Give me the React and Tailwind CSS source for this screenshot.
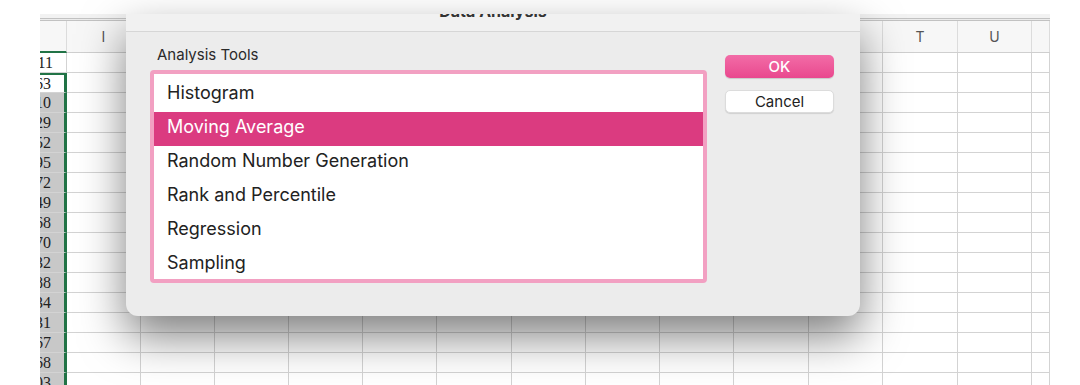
const colTemplate =
  "grid grid-cols-[27px_74px_74px_74px_74px_74px_75px_74px_74px_74px_75px_74px_75px_74px_18px]";

const letters = ["", "I", "J", "K", "L", "M", "N", "O", "P", "Q", "R", "S", "T", "U", ""];

const values = ["11", "63", "10", "29", "52", "95", "72", "49", "68", "70", "32", "88", "34", "31", "67", "68", "03"];

const tools = [
  "Histogram",
  "Moving Average",
  "Random Number Generation",
  "Rank and Percentile",
  "Regression",
  "Sampling",
];

function Sheet() {
  return (
    <div className="w-[1010px] ml-[40px] mt-[14px]">
      <div className="h-[4px] bg-[#f2f2f2]" />
      <div className="h-[3px] border-y border-[#c2c2c2] bg-[#ececec]" />
      <div className={`${colTemplate} h-[32px] bg-[#f7f7f7] border-b border-[#cfcfcf]`}>
        {letters.map((l, i) => (
          <div
            key={i}
            className={`flex items-center justify-center text-[14px] text-[#555] font-['Inter',sans-serif] ${
              i === 0 ? "border-r border-[#dcdcdc] border-b-2 border-b-[#217346] -mb-[1px]" : "border-r border-[#dcdcdc]"
            }`}
          >
            {l}
          </div>
        ))}
      </div>
      {values.map((v, r) => (
        <div key={r} className={`${colTemplate} h-[20px]`}>
          {letters.map((_, c) => {
            if (c === 0) {
              const bg = r < 2 ? "bg-white" : "bg-[#c8c8c8]";
              const green = r >= 1 ? "border-r-[3px] border-r-[#217346]" : "border-r border-r-[#d3d3d3]";
              const top = r === 1 ? "border-t-2 border-t-[#217346]" : "";
              return (
                <div
                  key={c}
                  className={`overflow-hidden flex items-center justify-end pr-[13px] border-b border-b-[#d3d3d3] ${bg} ${green} ${top}`}
                >
                  <span className="text-[16px] leading-none text-[#222] font-['Liberation_Serif',serif] whitespace-nowrap">
                    {v}
                  </span>
                </div>
              );
            }
            return <div key={c} className="bg-white border-r border-b border-[#d3d3d3]" />;
          })}
        </div>
      ))}
    </div>
  );
}

function Dialog() {
  return (
    <div className="absolute left-[126px] top-[14px] w-[734px] h-[302px] rounded-b-[12px] bg-[#ececec] shadow-[0_20px_45px_rgba(0,0,0,0.5)] font-['Inter',sans-serif]">
      <div className="h-[18px] bg-[#f1f1f1] border-b border-[#d6d6d6] overflow-hidden flex justify-center">
        <div className="-mt-[13px] text-[16px] leading-[20px] font-bold text-[#333]">Data Analysis</div>
      </div>
      <div className="flex pl-[24px]">
        <div className="flex flex-col">
          <div className="mt-[13px] ml-[7px] text-[15px] leading-[20px] text-[#2a2a2a]">Analysis Tools</div>
          <div className="mt-[5px] w-[557px] h-[213px] border-[4px] border-[#f2a0c2] rounded-[4px] bg-white overflow-hidden pt-[4px]">
            {tools.map((t, i) => (
              <div
                key={t}
                className={`h-[34px] pb-[5px] pl-[13px] flex items-center text-[18px] ${
                  i === 1 ? "bg-[#db3b80] text-white" : "text-[#222]"
                }`}
              >
                {t}
              </div>
            ))}
          </div>
        </div>
        <div className="ml-[18px] mt-[23px] flex flex-col gap-[12px]">
          <button className="w-[109px] h-[23px] rounded-[5px] bg-gradient-to-b from-[#f26ca7] to-[#e9478e] text-white text-[15px] font-medium leading-none shadow-[0_1px_1px_rgba(0,0,0,0.15)]">
            OK
          </button>
          <button className="w-[109px] h-[23px] rounded-[5px] bg-white text-[#222] text-[15px] leading-none border border-[#dcdcdc] shadow-[0_1px_1px_rgba(0,0,0,0.12)]">
            Cancel
          </button>
        </div>
      </div>
    </div>
  );
}

export default function App() {
  return (
    <div className="relative w-[1080px] h-[385px] overflow-hidden bg-white">
      <Sheet />
      <Dialog />
    </div>
  );
}
